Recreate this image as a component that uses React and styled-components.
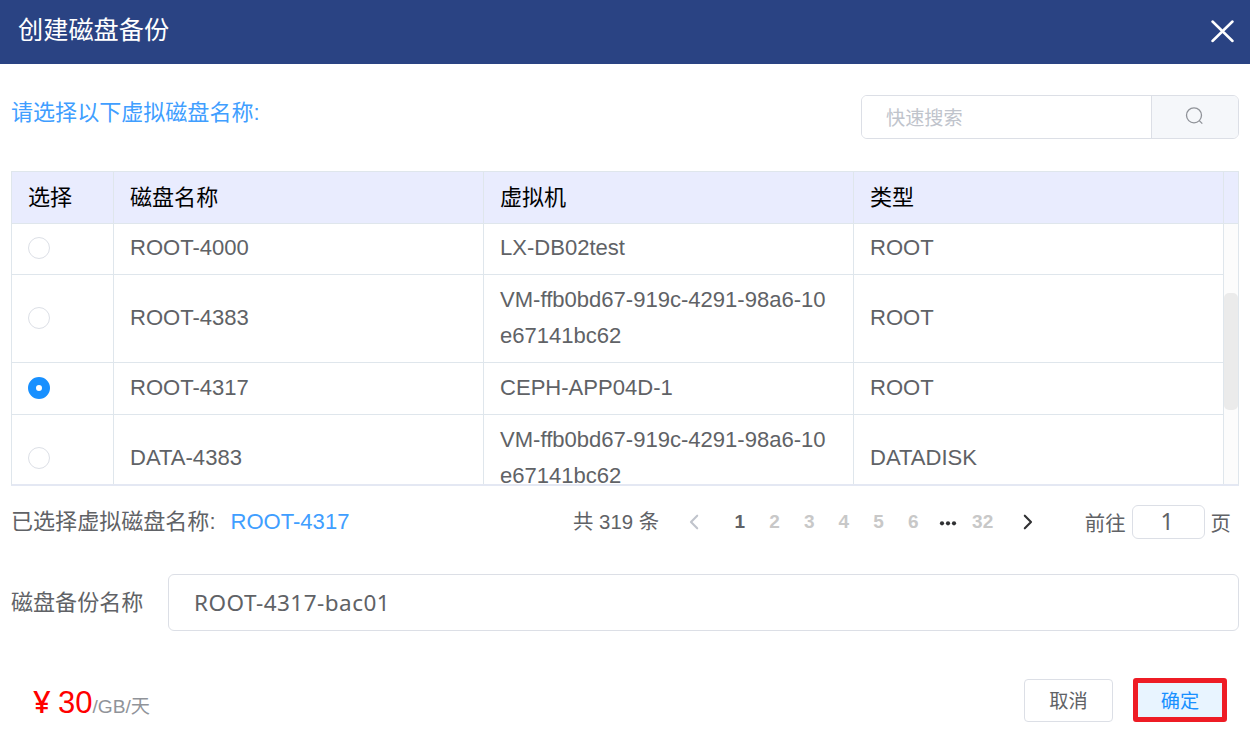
import React, { useState } from "react";
import styled, { createGlobalStyle } from "styled-components";

const GlobalStyle = createGlobalStyle`
  * { box-sizing: border-box; }
  body {
    margin: 0;
    background: #fff;
    color: #606266;
    font-family: "Liberation Sans", "Noto Sans CJK SC", sans-serif;
    font-size: 22.06px;
  }
  input, button { font: inherit; color: inherit; margin: 0; }
`;

const Dialog = styled.div`
  width: 1250px;
  height: 747px;
  overflow: hidden;
  display: flex;
  flex-direction: column;
  background: #fff;
`;

const Header = styled.header`
  height: 64px;
  flex: none;
  display: flex;
  justify-content: space-between;
  padding: 0 16px 0 18px;
  background: #2a4383;
  color: #fff;
`;

const Title = styled.h1`
  margin: 0;
  font-size: 25.2px;
  font-weight: 400;
  line-height: 60px;
`;

const CloseButton = styled.button`
  display: flex;
  align-items: center;
  height: 62px;
  padding: 0;
  border: 0;
  background: none;
  color: #fff;
`;

const Body = styled.main`
  display: flex;
  flex-direction: column;
  padding: 31px 11px 0;
`;

const Toolbar = styled.div`
  display: flex;
  justify-content: space-between;
  height: 76px;
`;

const Prompt = styled.div`
  color: #409eff;
  line-height: 35px;
`;

const Search = styled.div`
  display: flex;
  width: 378px;
  height: 44px;
  border: 1px solid #dcdfe6;
  border-radius: 6px;
  overflow: hidden;
`;

const SearchInput = styled.input`
  width: 289px;
  padding: 4px 24px 0;
  border: 0;
  outline: 0;
  font-size: 19.2px;
  &::placeholder { color: #c0c4cc; opacity: 1; }
`;

const SearchButton = styled.button`
  flex: 1;
  display: flex;
  align-items: center;
  justify-content: center;
  padding: 0 1px 3px 0;
  border: 0;
  border-left: 1px solid #dcdfe6;
  background: #f5f7fa;
  color: #909399;
`;

const Table = styled.div`
  display: flex;
  flex-direction: column;
  height: 315px;
  border: 1px solid #dfe6ec;
  border-bottom: 2px solid #e4e8f3;
`;

const HeadRow = styled.div`
  display: grid;
  grid-template-columns: 102px 370px 370px 370px 1fr;
  height: 52px;
  flex: none;
  background: #e9ecfe;
  border-bottom: 1px solid #dfe6ec;
  color: #000;
`;

const HeadCell = styled.div`
  padding-left: 16px;
  line-height: 51px;
  border-right: 1px solid #dfe6ec;
  &:last-child { border-right: 0; }
`;

const Scroller = styled.div`
  flex: 1;
  min-height: 0;
  display: flex;
  overflow: hidden;
`;

const Rows = styled.div`
  width: 1212px;
`;

const Row = styled.div`
  display: grid;
  grid-template-columns: 102px 370px 370px 370px;
  height: ${(p) => p.$height}px;
  &:not(:last-child) > div { border-bottom: 1px solid #dfe6ec; }
`;

const Cell = styled.div`
  display: flex;
  align-items: center;
  padding: 0 16px ${(p) => p.$lift || 0}px;
  border-right: 1px solid #dfe6ec;
  line-height: 36px;
  word-break: break-all;
`;

const Radio = styled.button`
  width: 22px;
  height: 22px;
  padding: 0;
  border-radius: 50%;
  border: ${(p) => (p.$on ? "8px solid #1890ff" : "1px solid #dcdfe6")};
  background: #fff;
`;

const Track = styled.div`
  flex: 1;
  padding-top: 69px;
  background: #fcfcfc;
`;

const Thumb = styled.div`
  height: 117px;
  border-radius: 5px;
  background: #ebebeb;
`;

const StatusBar = styled.div`
  display: flex;
  align-items: center;
  height: 71px;
`;

const Selected = styled.div`
  width: 562px;
  padding-bottom: 6px;
  white-space: nowrap;
`;

const DiskName = styled.span`
  margin-left: 15px;
  color: #409eff;
`;

const Pagination = styled.nav`
  flex: 1;
  display: flex;
  align-items: center;
  font-size: 20.4px;
  white-space: nowrap;
`;

const Total = styled.span`
  width: 104px;
  padding-bottom: 4px;
`;

const PageArrow = styled.button`
  display: flex;
  justify-content: center;
  width: ${(p) => p.$width}px;
  padding: 0;
  border: 0;
  background: none;
  color: ${(p) => (p.$disabled ? "#c0c4cc" : "#303133")};
`;

const Page = styled.button`
  display: flex;
  justify-content: center;
  width: 34.7px;
  padding: 0;
  border: 0;
  background: none;
  font-size: 19px;
  font-weight: 700;
  color: ${(p) => (p.$current ? "#606266" : "#c8c8c8")};
`;

const Jump = styled.label`
  display: flex;
  align-items: center;
  margin-left: auto;
  padding-right: 8px;
`;

const JumpInput = styled.input`
  width: 73px;
  height: 34px;
  margin: 0 6px;
  padding: 0 2px 2px 0;
  border: 1px solid #dcdfe6;
  border-radius: 6px;
  text-align: center;
  font-family: "Noto Sans", sans-serif;
  font-size: 23px;
`;

const Field = styled.label`
  display: flex;
  align-items: center;
  justify-content: space-between;
  margin-top: 17px;
`;

const FieldName = styled.span`
  padding-bottom: 6px;
`;

const FieldInput = styled.input`
  width: 1071px;
  height: 57px;
  padding: 0 25px;
  border: 1px solid #dcdfe6;
  border-radius: 6px;
  font-family: "Noto Sans", sans-serif;
  font-size: 22.5px;
  letter-spacing: 0.47px;
`;

const Footer = styled.footer`
  display: flex;
  justify-content: space-between;
  padding: 46px 12px 0 22px;
`;

const Price = styled.div`
  display: flex;
  align-items: baseline;
  line-height: 48px;
  font-size: 31px;
  color: #f00;
`;

const Currency = styled.span`
  width: 25px;
  font-family: "Noto Sans", sans-serif;
  font-size: 31px;
  font-weight: 500;
`;

const Unit = styled.span`
  font-size: 19.2px;
  color: #909399;
`;

const Actions = styled.div`
  display: flex;
  gap: 20px;
`;

const Button = styled.button`
  width: 89px;
  height: 43px;
  margin-top: 2px;
  padding: 0 0 1px;
  border: 1px solid #dcdfe6;
  border-radius: 4px;
  background: #fff;
  font-size: 19.2px;
`;

const ConfirmButton = styled(Button)`
  width: 94px;
  height: 44px;
  margin-top: 1px;
  border: 5px solid #ee1c25;
  border-radius: 3px;
  background: #e8f4ff;
  color: #1890ff;
`;

const disks = [
  { name: "ROOT-4000", vm: "LX-DB02test", type: "ROOT", height: 51, lift: 3, radioLift: 2 },
  { name: "ROOT-4383", vm: "VM-ffb0bd67-919c-4291-98a6-10e67141bc62", type: "ROOT", height: 88, lift: 1, radioLift: 2 },
  { name: "ROOT-4317", vm: "CEPH-APP04D-1", type: "ROOT", height: 52, lift: 1, radioLift: 2 },
  { name: "DATA-4383", vm: "VM-ffb0bd67-919c-4291-98a6-10e67141bc62", type: "DATADISK", height: 88, lift: 2, radioLift: 3 },
];

const CloseIcon = () => (
  <svg width="24" height="24" viewBox="0 0 24 24" fill="none" stroke="currentColor" strokeWidth="2.5" strokeLinecap="round">
    <path d="M2.5 2.5 22.5 22M22.5 2.5 2.5 22" />
  </svg>
);

const SearchIcon = () => (
  <svg width="19" height="19" viewBox="0 0 19 19" fill="none" stroke="currentColor" strokeWidth="1.3">
    <circle cx="9" cy="9.3" r="7.5" />
    <path d="m14.3 14.6 3 3" />
  </svg>
);

const Chevron = ({ left }) => (
  <svg width="10" height="16" viewBox="0 0 10 16" fill="none" stroke="currentColor" strokeWidth="2.1" strokeLinecap="round" strokeLinejoin="round">
    <path d={left ? "M8.2 1.7 2 8l6.2 6.3" : "M1.8 1.7 8 8l-6.2 6.3"} />
  </svg>
);

const Dots = () => (
  <svg width="18" height="9" viewBox="0 0 18 9" fill="#303133">
    <circle cx="3" cy="6.3" r="2.1" />
    <circle cx="9" cy="6.3" r="2.1" />
    <circle cx="15" cy="6.3" r="2.1" />
  </svg>
);

export default function App() {
  const [selected, setSelected] = useState("ROOT-4317");
  return (
    <Dialog>
      <GlobalStyle />
      <Header>
        <Title>创建磁盘备份</Title>
        <CloseButton><CloseIcon /></CloseButton>
      </Header>
      <Body>
        <Toolbar>
          <Prompt>请选择以下虚拟磁盘名称:</Prompt>
          <Search>
            <SearchInput placeholder="快速搜索" />
            <SearchButton><SearchIcon /></SearchButton>
          </Search>
        </Toolbar>
        <Table>
          <HeadRow>
            <HeadCell>选择</HeadCell>
            <HeadCell>磁盘名称</HeadCell>
            <HeadCell>虚拟机</HeadCell>
            <HeadCell>类型</HeadCell>
            <HeadCell />
          </HeadRow>
          <Scroller>
            <Rows>
              {disks.map((d) => (
                <Row key={d.name} $height={d.height}>
                  <Cell $lift={d.radioLift}>
                    <Radio $on={selected === d.name} onClick={() => setSelected(d.name)} />
                  </Cell>
                  <Cell $lift={d.lift}>{d.name}</Cell>
                  <Cell $lift={d.lift}>{d.vm}</Cell>
                  <Cell $lift={d.lift}>{d.type}</Cell>
                </Row>
              ))}
            </Rows>
            <Track><Thumb /></Track>
          </Scroller>
        </Table>
        <StatusBar>
          <Selected>
            已选择虚拟磁盘名称:
            <DiskName>{selected}</DiskName>
          </Selected>
          <Pagination>
            <Total>共 319 条</Total>
            <PageArrow $width={34} $disabled><Chevron left /></PageArrow>
            <Page $current style={{ marginLeft: 11.5 }}>1</Page>
            {[2, 3, 4, 5, 6].map((n) => <Page key={n}>{n}</Page>)}
            <Page><Dots /></Page>
            <Page>32</Page>
            <PageArrow $width={56}><Chevron /></PageArrow>
            <Jump>
              前往
              <JumpInput defaultValue="1" />
              页
            </Jump>
          </Pagination>
        </StatusBar>
        <Field>
          <FieldName>磁盘备份名称</FieldName>
          <FieldInput defaultValue="ROOT-4317-bac01" />
        </Field>
        <Footer>
          <Price>
            <Currency>¥</Currency>
            30
            <Unit>/GB/天</Unit>
          </Price>
          <Actions>
            <Button>取消</Button>
            <ConfirmButton>确定</ConfirmButton>
          </Actions>
        </Footer>
      </Body>
    </Dialog>
  );
}
